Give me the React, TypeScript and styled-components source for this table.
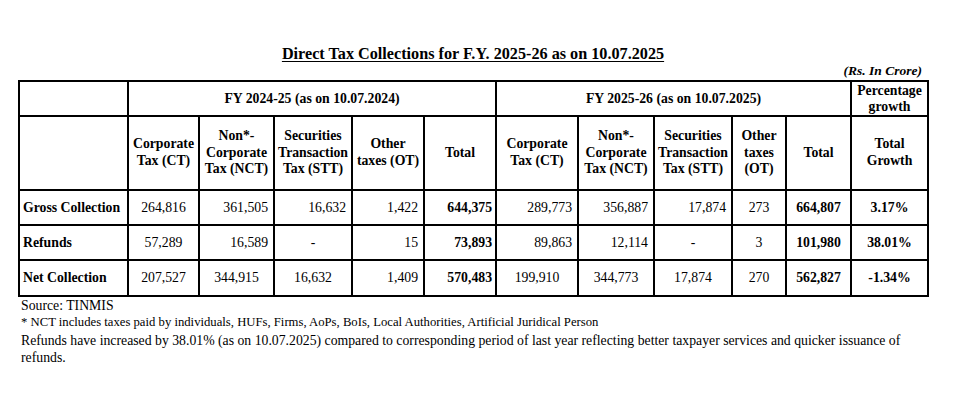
import React from "react";
import styled, { createGlobalStyle } from "styled-components";

const GlobalStyle = createGlobalStyle`
  html, body { margin: 0; padding: 0; background: #ffffff; }
  body {
    font-family: "Liberation Serif", "Times New Roman", serif;
    color: #000000;
  }
`;

const Page = styled.div`
  width: 910px;
  padding: 45px 0 0 18px;
`;

const Title = styled.h1`
  margin: 0;
  font-size: 16.2px;
  line-height: 18px;
  font-weight: 700;
  text-align: center;
  text-decoration: underline;
  text-decoration-thickness: 1px;
  text-underline-offset: 2px;
`;

const Unit = styled.div`
  text-align: right;
  font-size: 13.5px;
  line-height: 16px;
  font-weight: 700;
  font-style: italic;
  padding-right: 6px;
  margin-bottom: 1px;
`;

const Table = styled.table`
  border-collapse: collapse;
  table-layout: fixed;
  width: 909px;
  font-size: 13.75px;
`;

const Col = styled.col<{ $w: number }>`
  width: ${(p) => p.$w}px;
`;

const Row = styled.tr<{ $h: number }>`
  height: ${(p) => p.$h}px;
`;

const HeadCell = styled.th`
  border: 2px solid #000;
  font-weight: 700;
  text-align: center;
  vertical-align: middle;
  line-height: 16.6px;
  padding: 0;
  white-space: nowrap;
`;

const GroupCell = styled(HeadCell)`
  line-height: 16px;
`;

type Align = "left" | "center" | "right";

const DataCell = styled.td<{ $align: Align; $bold?: boolean }>`
  border: 2px solid #000;
  text-align: ${(p) => p.$align};
  font-weight: ${(p) => (p.$bold ? 700 : 400)};
  vertical-align: middle;
  line-height: 16px;
  padding: ${(p) => (p.$bold ? "0 3px" : "0 5px")};
  white-space: nowrap;
`;

const LabelCell = styled.td`
  border: 2px solid #000;
  font-weight: 700;
  text-align: left;
  vertical-align: middle;
  padding: 0 2px 0 3px;
  white-space: nowrap;
`;

const Notes = styled.div`
  padding-left: 3px;
`;

const Note = styled.p<{ $small?: boolean }>`
  margin: 0;
  font-size: ${(p) => (p.$small ? "12.7px" : "13.75px")};
  line-height: 17.4px;
`;

const widths = [109, 71, 75, 78, 72, 72, 82, 76, 78, 54, 65, 77];

type Cell = [string, Align, boolean?];

const rows: { label: string; cells: Cell[] }[] = [
  {
    label: "Gross Collection",
    cells: [
      ["264,816", "center"],
      ["361,505", "right"],
      ["16,632", "right"],
      ["1,422", "right"],
      ["644,375", "right", true],
      ["289,773", "right"],
      ["356,887", "right"],
      ["17,874", "right"],
      ["273", "center"],
      ["664,807", "center", true],
      ["3.17%", "center", true],
    ],
  },
  {
    label: "Refunds",
    cells: [
      ["57,289", "center"],
      ["16,589", "right"],
      ["-", "center"],
      ["15", "right"],
      ["73,893", "right", true],
      ["89,863", "right"],
      ["12,114", "right"],
      ["-", "center"],
      ["3", "center"],
      ["101,980", "center", true],
      ["38.01%", "center", true],
    ],
  },
  {
    label: "Net Collection",
    cells: [
      ["207,527", "center"],
      ["344,915", "center"],
      ["16,632", "center"],
      ["1,409", "right"],
      ["570,483", "right", true],
      ["199,910", "center"],
      ["344,773", "center"],
      ["17,874", "center"],
      ["270", "center"],
      ["562,827", "center", true],
      ["-1.34%", "center", true],
    ],
  },
];

const subHeads: React.ReactNode[] = [
  <>Corporate<br />Tax (CT)</>,
  <>Non*-<br />Corporate<br />Tax (NCT)</>,
  <>Securities<br />Transaction<br />Tax (STT)</>,
  <>Other<br />taxes (OT)</>,
  <>Total</>,
  <>Corporate<br />Tax (CT)</>,
  <>Non*-<br />Corporate<br />Tax (NCT)</>,
  <>Securities<br />Transaction<br />Tax (STT)</>,
  <>Other<br />taxes<br />(OT)</>,
  <>Total</>,
  <>Total<br />Growth</>,
];

const rowHeights = [35, 35, 36];

export default function App() {
  return (
    <>
      <GlobalStyle />
      <Page>
        <Title>Direct Tax Collections for F.Y. 2025-26 as on 10.07.2025</Title>
        <Unit>(Rs. In Crore)</Unit>
        <Table>
          <colgroup>
            {widths.map((w, i) => (
              <Col key={i} $w={w} />
            ))}
          </colgroup>
          <thead>
            <Row $h={35}>
              <HeadCell />
              <GroupCell colSpan={5}>FY 2024-25 (as on 10.07.2024)</GroupCell>
              <GroupCell colSpan={5}>FY 2025-26 (as on 10.07.2025)</GroupCell>
              <GroupCell>
                Percentage
                <br />
                growth
              </GroupCell>
            </Row>
            <Row $h={74}>
              <HeadCell />
              {subHeads.map((h, i) => (
                <HeadCell key={i}>{h}</HeadCell>
              ))}
            </Row>
          </thead>
          <tbody>
            {rows.map((r, ri) => (
              <Row key={r.label} $h={rowHeights[ri]}>
                <LabelCell>{r.label}</LabelCell>
                {r.cells.map(([v, a, b], i) => (
                  <DataCell key={i} $align={a} $bold={b}>
                    {v}
                  </DataCell>
                ))}
              </Row>
            ))}
          </tbody>
        </Table>
        <Notes>
          <Note>Source: TINMIS</Note>
          <Note $small>
            * NCT includes taxes paid by individuals, HUFs, Firms, AoPs, BoIs, Local Authorities, Artificial
            Juridical Person
          </Note>
          <Note>
            Refunds have increased by 38.01% (as on 10.07.2025) compared to corresponding period of last year
            reflecting better taxpayer services and quicker issuance of refunds.
          </Note>
        </Notes>
      </Page>
    </>
  );
}
